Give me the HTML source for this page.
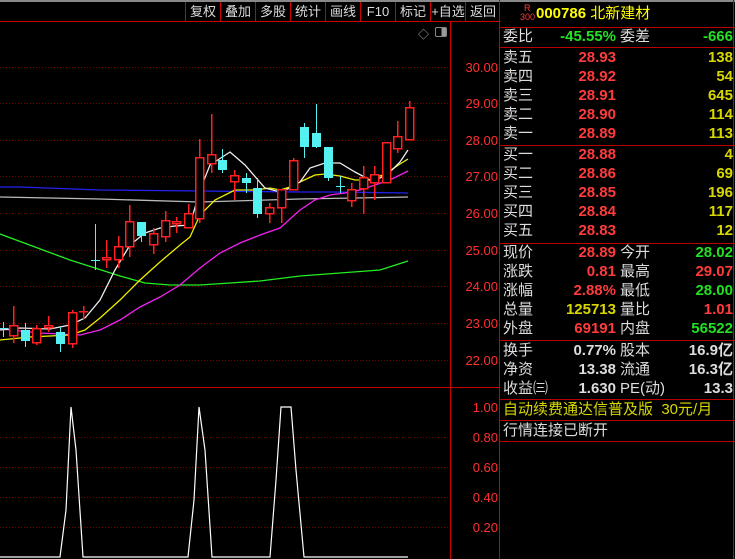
<!DOCTYPE html>
<html><head><meta charset="utf-8"><style>
*{margin:0;padding:0;box-sizing:border-box}
body{width:735px;height:559px;background:#000;overflow:hidden;position:relative;font-family:"Liberation Sans","Noto Sans CJK SC",sans-serif}
.a{position:absolute;white-space:nowrap}
.tb{position:absolute;top:2px;height:19px;font-size:13px;color:#ddd;text-align:center;line-height:19px;border-left:1px solid #c00}
.r{position:absolute;left:503px;width:230px;height:18px;font-size:15px;line-height:18px;color:#ddd}
.r span{position:absolute}
.r span+span{font-weight:bold}
.r span.lb{font-weight:normal}
.red{color:#ff3b3b}.grn{color:#22e022}.yel{color:#d8d800}.wh{color:#ddd}
.hl{position:absolute;left:500px;width:235px;height:1px;background:#b00}
.ax{position:absolute;left:460px;font-size:13px;color:#ff3030;width:38px;text-align:right}
.rd line,.rd rect{stroke:#ff2020;fill:#000}
.cy line,.cy rect{stroke:#55f0f0;fill:#55f0f0}
</style></head><body>
<div class="a" style="left:0;top:0;width:735px;height:2px;background:#888"></div>
<div class="tb" style="left:185px;width:35px">复权</div>
<div class="tb" style="left:220px;width:35px">叠加</div>
<div class="tb" style="left:255px;width:35px">多股</div>
<div class="tb" style="left:290px;width:35px">统计</div>
<div class="tb" style="left:325px;width:35px">画线</div>
<div class="tb" style="left:360px;width:35px">F10</div>
<div class="tb" style="left:395px;width:35px">标记</div>
<div class="tb" style="left:430px;width:35px">+自选</div>
<div class="tb" style="left:465px;width:35px">返回</div>
<div class="a" style="left:0;top:21px;width:500px;height:1px;background:#c00"></div>
<div class="a" style="left:450px;top:22px;width:1px;height:537px;background:#c00"></div>
<div class="a" style="left:0;top:387px;width:500px;height:1px;background:#c00"></div>
<div class="a" style="left:499px;top:0;width:1px;height:559px;background:#c00"></div>
<div class="a" style="left:733px;top:0;width:1px;height:559px;background:#c00"></div>
<div class="a" style="left:418px;top:26px;font-size:11px;color:#aaa">◇</div>
<div class="a" style="left:435px;top:27px;width:12px;height:10px;border:1px solid #888;border-radius:2px;background:linear-gradient(90deg,#000 55%,#999 55%)"></div>

<svg class="a" style="left:0;top:0" width="450" height="559">
<g stroke="#700" stroke-dasharray="1,2" stroke-width="1">
<line x1="0" y1="67.5" x2="450" y2="67.5"/><line x1="0" y1="103.5" x2="450" y2="103.5"/><line x1="0" y1="140.5" x2="450" y2="140.5"/><line x1="0" y1="176.5" x2="450" y2="176.5"/><line x1="0" y1="213.5" x2="450" y2="213.5"/><line x1="0" y1="250.5" x2="450" y2="250.5"/><line x1="0" y1="286.5" x2="450" y2="286.5"/><line x1="0" y1="323.5" x2="450" y2="323.5"/><line x1="0" y1="360.5" x2="450" y2="360.5"/>
<line x1="0" y1="437.5" x2="450" y2="437.5"/><line x1="0" y1="467.5" x2="450" y2="467.5"/><line x1="0" y1="497.5" x2="450" y2="497.5"/><line x1="0" y1="527.5" x2="450" y2="527.5"/>
</g>
<g fill="none" stroke-width="1.3">
<polyline stroke="#22e" points="0,187 20,187 100,190 200,191 300,192 330,192 408,193"/>
<polyline stroke="#bbb" points="0,197 100,199 200,202 300,199 408,197"/>
<polyline stroke="#2e2" points="0,234 35,247 70,260 95,268 120,276 145,283 170,285 200,285 230,283 260,281 300,276 340,273 380,270 408,261"/>
<polyline stroke="#e2e" points="0,329 40,333 80,335 100,330 120,320 140,307 160,297 180,285 200,268 220,253 240,243 260,235 280,228 300,210 315,200 330,195 345,193 360,190 375,185 390,180 408,171"/>
<polyline stroke="#ee0" points="0,340 30,337 70,335 85,330 100,318 120,300 140,280 160,262 180,245 190,237 200,215 215,200 235,190 255,190 270,188 280,190 290,187 300,182 315,175 325,174 340,176 355,180 370,180 385,174 400,164 408,159"/>
<polyline stroke="#eee" points="0,330 20,328 50,329 70,325 85,318 100,300 115,270 130,245 145,233 160,228 175,226 190,225 200,190 210,165 230,152 245,165 265,188 280,192 290,188 300,182 310,168 325,163 340,163 355,172 370,180 380,178 390,172 400,162 408,150"/>
</g>
<g class="rd" stroke-width="1.5" shape-rendering="crispEdges">
<line x1="13.5" y1="306" x2="13.5" y2="343"/><rect x="9.5" y="325.5" width="8" height="10"/>
<line x1="36.5" y1="325" x2="36.5" y2="345"/><rect x="32.5" y="328.5" width="8" height="14"/>
<line x1="48.5" y1="316" x2="48.5" y2="332"/><rect x="44.5" y="325.5" width="8" height="2"/>
<line x1="72.5" y1="310" x2="72.5" y2="348"/><rect x="68.5" y="312.5" width="8" height="31"/>
<line x1="83.5" y1="306" x2="83.5" y2="319"/><line x1="79" y1="311.5" x2="88" y2="311.5"/>
<line x1="106.5" y1="240" x2="106.5" y2="268"/><rect x="102.5" y="257.5" width="8" height="2"/>
<line x1="118.5" y1="236" x2="118.5" y2="268"/><rect x="114.5" y="246.5" width="8" height="13"/>
<line x1="129.5" y1="205" x2="129.5" y2="257"/><rect x="125.5" y="221.5" width="8" height="25"/>
<line x1="153.5" y1="228" x2="153.5" y2="254"/><rect x="149.5" y="233.5" width="8" height="11"/>
<line x1="165.5" y1="211" x2="165.5" y2="242"/><rect x="161.5" y="220.5" width="8" height="16"/>
<line x1="176.5" y1="217" x2="176.5" y2="233"/><rect x="172.5" y="221.5" width="8" height="2"/>
<line x1="188.5" y1="204" x2="188.5" y2="227"/><rect x="184.5" y="213.5" width="8" height="14"/>
<line x1="199.5" y1="139" x2="199.5" y2="223"/><rect x="195.5" y="157.5" width="8" height="61"/>
<line x1="211.5" y1="114" x2="211.5" y2="173"/><rect x="207.5" y="154.5" width="8" height="9"/>
<line x1="234.5" y1="170" x2="234.5" y2="200"/><rect x="230.5" y="175.5" width="8" height="6"/>
<line x1="269.5" y1="203" x2="269.5" y2="223"/><rect x="265.5" y="207.5" width="8" height="6"/>
<line x1="281.5" y1="189" x2="281.5" y2="223"/><rect x="277.5" y="189.5" width="8" height="18"/>
<line x1="293.5" y1="158" x2="293.5" y2="190"/><rect x="289.5" y="160.5" width="8" height="29"/>
<line x1="351.5" y1="183" x2="351.5" y2="207"/><rect x="347.5" y="189.5" width="8" height="11"/>
<line x1="363.5" y1="166" x2="363.5" y2="214"/><rect x="359.5" y="177.5" width="8" height="11"/>
<line x1="374.5" y1="166" x2="374.5" y2="200"/><rect x="370.5" y="174.5" width="8" height="8"/>
<line x1="386.5" y1="142" x2="386.5" y2="182"/><rect x="382.5" y="142.5" width="8" height="40"/>
<line x1="397.5" y1="121" x2="397.5" y2="153"/><rect x="393.5" y="136.5" width="8" height="12"/>
<line x1="409.5" y1="101" x2="409.5" y2="139"/><rect x="405.5" y="107.5" width="8" height="32"/>
</g>
<g class="cy" stroke-width="1.2" shape-rendering="crispEdges">
<line x1="3.5" y1="322" x2="3.5" y2="337"/><line x1="0" y1="328.5" x2="8" y2="328.5"/>
<line x1="25.5" y1="323" x2="25.5" y2="347"/><rect x="21.5" y="330.5" width="8" height="10"/>
<line x1="60.5" y1="327" x2="60.5" y2="352"/><rect x="56.5" y="332.5" width="8" height="11"/>
<line x1="95.5" y1="224" x2="95.5" y2="270"/><line x1="91" y1="260.5" x2="100" y2="260.5"/>
<line x1="141.5" y1="222" x2="141.5" y2="242"/><rect x="137.5" y="222.5" width="8" height="13"/>
<line x1="222.5" y1="149" x2="222.5" y2="173"/><rect x="218.5" y="160.5" width="8" height="9"/>
<line x1="246.5" y1="173" x2="246.5" y2="193"/><rect x="242.5" y="178.5" width="8" height="4"/>
<line x1="257.5" y1="178" x2="257.5" y2="218"/><rect x="253.5" y="188.5" width="8" height="25"/>
<line x1="304.5" y1="123" x2="304.5" y2="158"/><rect x="300.5" y="127.5" width="8" height="19"/>
<line x1="316.5" y1="104" x2="316.5" y2="148"/><rect x="312.5" y="133.5" width="8" height="13"/>
<line x1="328.5" y1="147" x2="328.5" y2="181"/><rect x="324.5" y="147.5" width="8" height="30"/>
<line x1="340.5" y1="176" x2="340.5" y2="193"/><line x1="336" y1="186.5" x2="345" y2="186.5"/>
</g>
<polyline fill="none" stroke="#fff" stroke-width="1.2" points="0,557 60,557 66,510 71,407 76,450 83,557 188,557 194,500 199,407 205,450 212,557 270,557 276,480 281,407 291,407 296,470 304,557 408,557"/>
</svg>

<div class="ax" style="top:60px">30.00</div>
<div class="ax" style="top:96px">29.00</div>
<div class="ax" style="top:133px">28.00</div>
<div class="ax" style="top:169px">27.00</div>
<div class="ax" style="top:206px">26.00</div>
<div class="ax" style="top:243px">25.00</div>
<div class="ax" style="top:279px">24.00</div>
<div class="ax" style="top:316px">23.00</div>
<div class="ax" style="top:353px">22.00</div>
<div class="ax" style="top:400px">1.00</div>
<div class="ax" style="top:430px">0.80</div>
<div class="ax" style="top:460px">0.60</div>
<div class="ax" style="top:490px">0.40</div>
<div class="ax" style="top:520px">0.20</div>

<div class="a" style="left:524px;top:4px;font-size:9px;color:#ff3b3b;line-height:9px">R</div>
<div class="a" style="left:520px;top:13px;font-size:9px;color:#ff3b3b;line-height:9px">300</div>
<div class="a" style="left:536px;top:5px;font-size:15px;color:#ffff00;font-weight:bold;line-height:17px">000786 <span style="font-weight:normal">北新建材</span></div>
<div class="hl" style="top:27px"></div>
<div class="r" style="top:28px"><span>委比</span><span class="grn" style="right:117px">-45.55%</span><span class="lb" style="left:117px">委差</span><span class="grn" style="right:0">-666</span></div>
<div class="hl" style="top:47px"></div>
<div class="r" style="top:49px"><span>卖五</span><span class="red" style="right:117px">28.93</span><span class="yel" style="right:0">138</span></div>
<div class="r" style="top:68px"><span>卖四</span><span class="red" style="right:117px">28.92</span><span class="yel" style="right:0">54</span></div>
<div class="r" style="top:87px"><span>卖三</span><span class="red" style="right:117px">28.91</span><span class="yel" style="right:0">645</span></div>
<div class="r" style="top:106px"><span>卖二</span><span class="red" style="right:117px">28.90</span><span class="yel" style="right:0">114</span></div>
<div class="r" style="top:125px"><span>卖一</span><span class="red" style="right:117px">28.89</span><span class="yel" style="right:0">113</span></div>
<div class="hl" style="top:145px"></div>
<div class="r" style="top:146px"><span>买一</span><span class="red" style="right:117px">28.88</span><span class="yel" style="right:0">4</span></div>
<div class="r" style="top:165px"><span>买二</span><span class="red" style="right:117px">28.86</span><span class="yel" style="right:0">69</span></div>
<div class="r" style="top:184px"><span>买三</span><span class="red" style="right:117px">28.85</span><span class="yel" style="right:0">196</span></div>
<div class="r" style="top:203px"><span>买四</span><span class="red" style="right:117px">28.84</span><span class="yel" style="right:0">117</span></div>
<div class="r" style="top:222px"><span>买五</span><span class="red" style="right:117px">28.83</span><span class="yel" style="right:0">12</span></div>
<div class="hl" style="top:243px"></div>
<div class="r" style="top:244px"><span>现价</span><span class="red" style="right:117px">28.89</span><span class="lb" style="left:117px">今开</span><span class="grn" style="right:0">28.02</span></div>
<div class="r" style="top:263px"><span>涨跌</span><span class="red" style="right:117px">0.81</span><span class="lb" style="left:117px">最高</span><span class="red" style="right:0">29.07</span></div>
<div class="r" style="top:282px"><span>涨幅</span><span class="red" style="right:117px">2.88%</span><span class="lb" style="left:117px">最低</span><span class="grn" style="right:0">28.00</span></div>
<div class="r" style="top:301px"><span>总量</span><span class="yel" style="right:117px">125713</span><span class="lb" style="left:117px">量比</span><span class="red" style="right:0">1.01</span></div>
<div class="r" style="top:320px"><span>外盘</span><span class="red" style="right:117px">69191</span><span class="lb" style="left:117px">内盘</span><span class="grn" style="right:0">56522</span></div>
<div class="hl" style="top:340px"></div>
<div class="r" style="top:342px"><span>换手</span><span style="right:117px">0.77%</span><span class="lb" style="left:117px">股本</span><span style="right:0">16.9亿</span></div>
<div class="r" style="top:361px"><span>净资</span><span style="right:117px">13.38</span><span class="lb" style="left:117px">流通</span><span style="right:0">16.3亿</span></div>
<div class="r" style="top:380px"><span>收益㈢</span><span style="right:117px">1.630</span><span class="lb" style="left:117px">PE(动)</span><span style="right:0">13.3</span></div>
<div class="hl" style="top:399px"></div>
<div class="r yel" style="top:401px"><span>自动续费通达信普及版&nbsp; 30元/月</span></div>
<div class="hl" style="top:420px"></div>
<div class="r" style="top:422px"><span>行情连接已断开</span></div>
<div class="hl" style="top:441px"></div>
</body></html>
